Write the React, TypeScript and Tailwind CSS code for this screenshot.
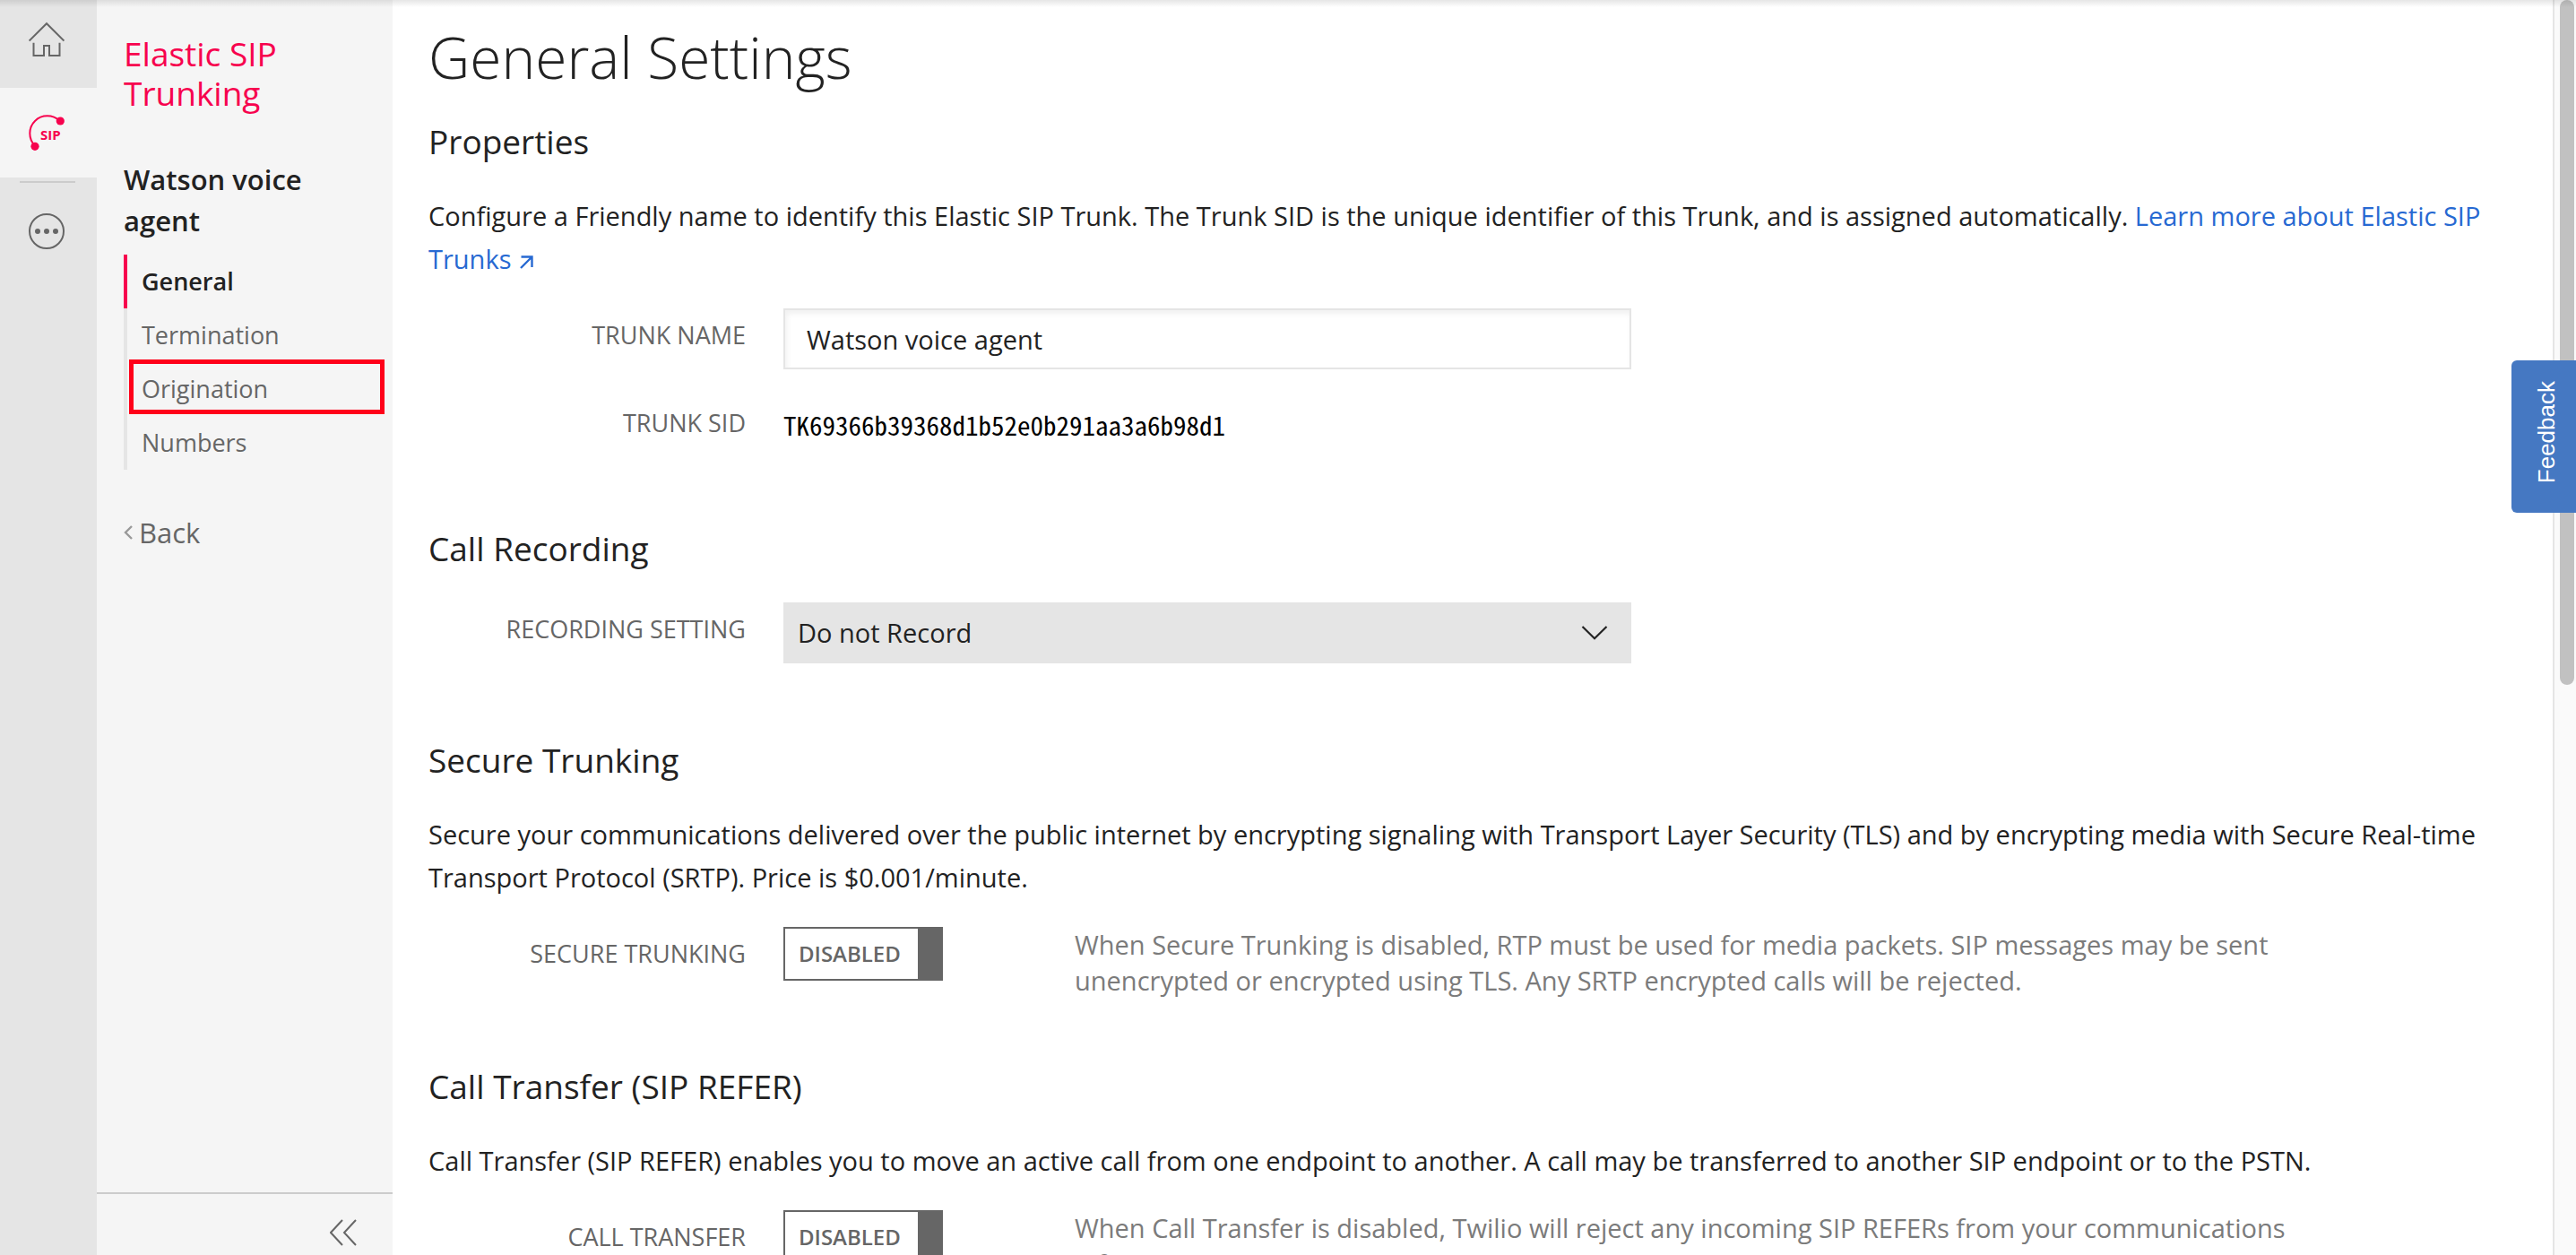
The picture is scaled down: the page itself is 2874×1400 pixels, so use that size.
import type { ReactNode } from "react";

const SANS = "font-['Open_Sans','Noto_Sans',sans-serif]";

function HomeIcon() {
  return (
    <svg width="40" height="40" viewBox="0 0 40 40" fill="none" stroke="#666" strokeWidth="2" aria-hidden="true">
      <path d="M0.6 21.6 20 2.2 39.4 21.6" />
      <path d="M5.5 23.7V38H17V27h6v11h11.5V23.7" />
    </svg>
  );
}

function SipIcon() {
  return (
    <svg width="40" height="40" viewBox="0 0 40 40" aria-hidden="true">
      <path d="M7 34.5A19 19 0 0 1 34.5 7" fill="none" stroke="#f7024e" strokeWidth="2" />
      <circle cx="35.3" cy="7" r="4.6" fill="#f7024e" />
      <circle cx="7" cy="35.3" r="4.6" fill="#f7024e" />
      <text x="13" y="28" fill="#f7024e" fontSize="15" fontWeight="700">
        SIP
      </text>
    </svg>
  );
}

function MoreIcon() {
  return (
    <svg width="40" height="40" viewBox="0 0 40 40" fill="#666" aria-hidden="true">
      <circle cx="20" cy="20" r="19" fill="none" stroke="#666" strokeWidth="2" />
      <circle cx="10" cy="20" r="3" />
      <circle cx="20" cy="20" r="3" />
      <circle cx="30" cy="20" r="3" />
    </svg>
  );
}

function Rail() {
  return (
    <nav aria-label="Products" className="flex w-[108px] shrink-0 flex-col bg-[#e5e5e5]">
      <a href="#home" aria-label="Home" className="flex h-[98px] items-start pt-6 pl-8">
        <HomeIcon />
      </a>
      <a href="#sip" aria-label="Elastic SIP Trunking" className="flex h-[100px] items-center bg-[#f5f5f5] pl-8">
        <SipIcon />
      </a>
      <div className="mt-1 ml-[22px] h-[2px] w-[62px] bg-[#ccc]" />
      <button type="button" aria-label="All products" className="mt-[34px] ml-8 size-10">
        <MoreIcon />
      </button>
    </nav>
  );
}

const NAV = ["General", "Termination", "Origination", "Numbers"];

function NavItem({ label }: { label: string }) {
  const active = label === "General";
  return (
    <li
      className={
        active
          ? "relative border-l-4 border-[#f7024e] font-semibold text-[#222]"
          : "relative border-l-4 border-[#e5e5e5] text-[#666]"
      }
    >
      <a href={`#${label.toLowerCase()}`} className="block pl-4 text-[27px] leading-[60px]">
        {label}
      </a>
      {label === "Origination" && (
        <span className="pointer-events-none absolute -top-[3px] right-[9px] left-[2px] h-[61px] border-[5px] border-[#ff0019]" />
      )}
    </li>
  );
}

function SideNav() {
  return (
    <aside className="flex w-[330px] shrink-0 flex-col bg-[#f5f5f5]">
      <div className="flex-1 pt-[38px] pl-[30px]">
        <h2 className="w-[240px] text-[37px] leading-[44px] text-[#f7024e]">Elastic SIP Trunking</h2>
        <h3 className="mt-[51px] w-[240px] text-[31px] leading-[46px] font-semibold text-[#222]">
          Watson voice agent
        </h3>
        <ul className="mt-[15px]">
          {NAV.map((n) => (
            <NavItem key={n} label={n} />
          ))}
        </ul>
        <a href="#back" className="mt-[46px] flex items-center gap-[7px] text-[31px] leading-[48px] text-[#666]">
          <svg width="10" height="16" viewBox="0 0 10 16" fill="none" stroke="#999" strokeWidth="2.4" aria-hidden="true">
            <path d="M9 1 2 8l7 7" />
          </svg>
          Back
        </a>
      </div>
      <div className="flex h-[70px] justify-end border-t-2 border-[#ccc] pt-7 pr-10">
        <button type="button" aria-label="Collapse menu" className="h-[30px] w-[30px]">
          <svg width="30" height="30" viewBox="0 0 30 30" fill="none" stroke="#666" strokeWidth="2" aria-hidden="true">
            <path d="M14 1 1 15l13 14M29 1 16 15l13 14" />
          </svg>
        </button>
      </div>
    </aside>
  );
}

function Heading({ children }: { children: ReactNode }) {
  return <h2 className="text-[37px] leading-[48px]">{children}</h2>;
}

function Paragraph({ children }: { children: ReactNode }) {
  return <p className="mt-[35px] text-[29px] leading-[48px]">{children}</p>;
}

const LABEL = "w-[354px] shrink-0 text-right text-[27px] leading-[60px] text-[#666]";

function ToggleRow({ id, label, children }: { id: string; label: string; children: ReactNode }) {
  return (
    <div className="mt-[31px] flex items-start gap-[42px]">
      <span id={id} className={LABEL}>
        {label}
      </span>
      <div className="w-[283px] shrink-0">
        <button
          type="button"
          role="switch"
          aria-checked="false"
          aria-labelledby={id}
          className="flex h-[60px] w-[178px] items-stretch border-2 border-[#666] bg-white text-[24px] font-semibold text-[#666]"
        >
          <span className="flex flex-1 items-center pl-[15px]">DISABLED</span>
          <span className="w-[26px] bg-[#666]" />
        </button>
      </div>
      <p className="max-w-[1400px] text-[29px] leading-[40px] text-[#7b7b7b]">{children}</p>
    </div>
  );
}

function Main() {
  return (
    <main className="min-w-0 flex-1 overflow-hidden bg-white pt-6 pr-12 pl-10 text-[#222]">
      <h1 className="text-[64px] leading-[80px] font-light">General Settings</h1>

      <section className="mt-[30px]">
        <Heading>Properties</Heading>
        <Paragraph>
          Configure a Friendly name to identify this Elastic SIP Trunk. The Trunk SID is the unique identifier of this
          Trunk, and is assigned automatically.{" "}
          <a href="#learn" className="text-[#2769d2]">
            Learn more about Elastic SIP Trunks
            <svg
              width="15"
              height="15"
              viewBox="0 0 15 15"
              fill="none"
              stroke="currentColor"
              strokeWidth="2.4"
              className="ml-[10px] inline-block align-baseline"
              aria-hidden="true"
            >
              <path d="M1 14 13.5 1.5M1.5 1.5h12V13" />
            </svg>
          </a>
        </Paragraph>
        <div className="mt-[31px] flex items-start gap-[42px]">
          <label htmlFor="trunk-name" className={LABEL}>
            TRUNK NAME
          </label>
          <input
            id="trunk-name"
            type="text"
            defaultValue="Watson voice agent"
            className="h-[68px] w-[946px] border-2 border-[#e5e5e5] bg-white pl-6 text-[29px] shadow-[inset_2px_4px_6px_rgba(0,0,0,0.06)] outline-none"
          />
        </div>
        <div className="mt-[30px] flex items-start gap-[42px]">
          <span className={LABEL}>TRUNK SID</span>
          <span className="h-[62px] font-['Noto_Sans_Mono_CJK_SC','Liberation_Mono',monospace] text-[29px] leading-[62px] text-black">
            TK69366b39368d1b52e0b291aa3a6b98d1
          </span>
        </div>
      </section>

      <section className="mt-[84px]">
        <Heading>Call Recording</Heading>
        <div className="mt-9 flex items-start gap-[42px]">
          <label htmlFor="recording" className={LABEL}>
            RECORDING SETTING
          </label>
          <div className="relative w-[946px]">
            <select
              id="recording"
              className="h-[68px] w-full appearance-none bg-[#e5e5e5] pl-4 text-[29px] outline-none"
            >
              <option>Do not Record</option>
            </select>
            <svg
              width="30"
              height="16"
              viewBox="0 0 30 16"
              fill="none"
              stroke="#222"
              strokeWidth="2.2"
              className="pointer-events-none absolute top-[26px] right-[26px]"
              aria-hidden="true"
            >
              <path d="M1.5 1 15 14.2 28.5 1" />
            </svg>
          </div>
        </div>
      </section>

      <section className="mt-[84px]">
        <Heading>Secure Trunking</Heading>
        <Paragraph>
          Secure your communications delivered over the public internet by encrypting signaling with Transport Layer
          Security (TLS) and by encrypting media with Secure Real-time Transport Protocol (SRTP). Price is
          $0.001/minute.
        </Paragraph>
        <ToggleRow id="secure-label" label="SECURE TRUNKING">
          When Secure Trunking is disabled, RTP must be used for media packets. SIP messages may be sent unencrypted or
          encrypted using TLS. Any SRTP encrypted calls will be rejected.
        </ToggleRow>
      </section>

      <section className="mt-[74px]">
        <Heading>Call Transfer (SIP REFER)</Heading>
        <Paragraph>
          Call Transfer (SIP REFER) enables you to move an active call from one endpoint to another. A call may be
          transferred to another SIP endpoint or to the PSTN.
        </Paragraph>
        <ToggleRow id="transfer-label" label="CALL TRANSFER">
          When Call Transfer is disabled, Twilio will reject any incoming SIP REFERs from your communications
          infrastructure.
        </ToggleRow>
      </section>
    </main>
  );
}

export default function App() {
  return (
    <div className={`relative flex h-screen overflow-hidden bg-white ${SANS}`}>
      <Rail />
      <SideNav />
      <Main />
      <div className="w-[26px] shrink-0 border-l-2 border-[#e5e5e5] bg-[#fafafa] pr-[2px] pl-[6px]">
        <div className="h-[764px] rounded-full bg-[#c1c1c1]" />
      </div>
      <div className="pointer-events-none absolute inset-x-0 top-0 h-2 bg-linear-to-b from-black/10 to-transparent" />
      <button
        type="button"
        className="absolute top-[402px] right-0 flex h-[170px] w-[72px] items-center justify-center rounded-l-md bg-[#4578c2] text-[26px] text-white font-['Liberation_Sans',sans-serif]"
      >
        <span className="rotate-180 pt-[10px] pr-[6px] [writing-mode:vertical-rl]">Feedback</span>
      </button>
    </div>
  );
}
